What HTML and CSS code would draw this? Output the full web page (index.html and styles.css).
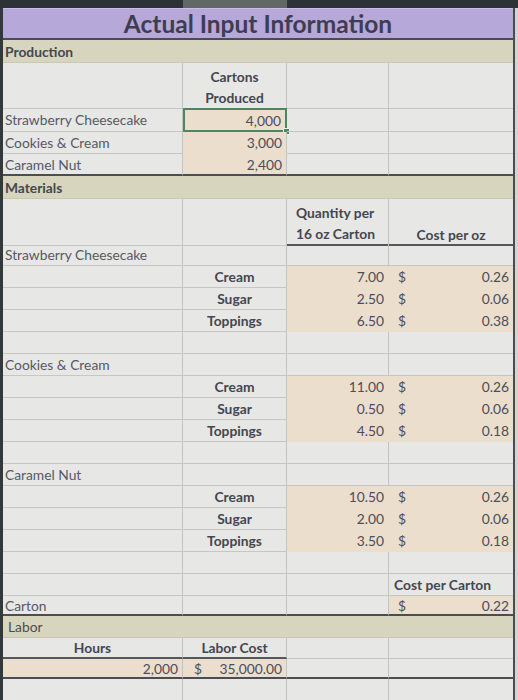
FILE: index.html
```html
<!DOCTYPE html>
<html>
<head>
<meta charset="utf-8">
<link rel="stylesheet" href="styles.css">
</head>
<body>
<div class="page">
  <div class="topbar"><span class="tab"></span></div>
  <div class="sheet">
    <div class="title">Actual Input Information</div>
    <div class="band band-prod">Production</div>

    <div class="row h45">
      <div class="c"></div>
      <div class="c ctr b two">Cartons<br>Produced</div>
      <div class="c"></div>
      <div class="c"></div>
    </div>
    <div class="row h24">
      <div class="c l lab">Strawberry Cheesecake</div>
      <div class="c r pe sel">4,000<span class="handle"></span></div>
      <div class="c"></div>
      <div class="c"></div>
    </div>
    <div class="row">
      <div class="c l lab">Cookies &amp; Cream</div>
      <div class="c r pe">3,000</div>
      <div class="c"></div>
      <div class="c"></div>
    </div>
    <div class="row dk">
      <div class="c l lab">Caramel Nut</div>
      <div class="c r pe">2,400</div>
      <div class="c"></div>
      <div class="c"></div>
    </div>

    <div class="band band-mat">Materials</div>

    <div class="row h45">
      <div class="c"></div>
      <div class="c"></div>
      <div class="c b two lft dkb">Quantity per<br>16 oz Carton</div>
      <div class="c b ctr bot dkb">Cost per oz</div>
    </div>

    <div class="row">
      <div class="c l lab">Strawberry Cheesecake</div>
      <div class="c"></div><div class="c"></div><div class="c"></div>
    </div>
    <div class="row">
      <div class="c"></div><div class="c ctr b">Cream</div>
      <div class="c r pe">7.00</div><div class="c pe money"><span>$</span><span>0.26</span></div>
    </div>
    <div class="row">
      <div class="c"></div><div class="c ctr b">Sugar</div>
      <div class="c r pe">2.50</div><div class="c pe money"><span>$</span><span>0.06</span></div>
    </div>
    <div class="row">
      <div class="c"></div><div class="c ctr b">Toppings</div>
      <div class="c r pe">6.50</div><div class="c pe money"><span>$</span><span>0.38</span></div>
    </div>
    <div class="row">
      <div class="c"></div><div class="c"></div><div class="c"></div><div class="c"></div>
    </div>

    <div class="row">
      <div class="c l lab">Cookies &amp; Cream</div>
      <div class="c"></div><div class="c"></div><div class="c"></div>
    </div>
    <div class="row">
      <div class="c"></div><div class="c ctr b">Cream</div>
      <div class="c r pe">11.00</div><div class="c pe money"><span>$</span><span>0.26</span></div>
    </div>
    <div class="row">
      <div class="c"></div><div class="c ctr b">Sugar</div>
      <div class="c r pe">0.50</div><div class="c pe money"><span>$</span><span>0.06</span></div>
    </div>
    <div class="row">
      <div class="c"></div><div class="c ctr b">Toppings</div>
      <div class="c r pe">4.50</div><div class="c pe money"><span>$</span><span>0.18</span></div>
    </div>
    <div class="row">
      <div class="c"></div><div class="c"></div><div class="c"></div><div class="c"></div>
    </div>

    <div class="row">
      <div class="c l lab">Caramel Nut</div>
      <div class="c"></div><div class="c"></div><div class="c"></div>
    </div>
    <div class="row">
      <div class="c"></div><div class="c ctr b">Cream</div>
      <div class="c r pe">10.50</div><div class="c pe money"><span>$</span><span>0.26</span></div>
    </div>
    <div class="row">
      <div class="c"></div><div class="c ctr b">Sugar</div>
      <div class="c r pe">2.00</div><div class="c pe money"><span>$</span><span>0.06</span></div>
    </div>
    <div class="row">
      <div class="c"></div><div class="c ctr b">Toppings</div>
      <div class="c r pe">3.50</div><div class="c pe money"><span>$</span><span>0.18</span></div>
    </div>
    <div class="row">
      <div class="c"></div><div class="c"></div><div class="c"></div><div class="c"></div>
    </div>

    <div class="row">
      <div class="c"></div><div class="c"></div><div class="c"></div>
      <div class="c b lft cpc">Cost per Carton</div>
    </div>
    <div class="row h20 dk">
      <div class="c l lab">Carton</div>
      <div class="c"></div><div class="c"></div>
      <div class="c pe money"><span>$</span><span>0.22</span></div>
    </div>

    <div class="band band-lab">Labor</div>

    <div class="row h21">
      <div class="c b ctr dkb">Hours</div>
      <div class="c b ctr dkb">Labor Cost</div>
      <div class="c"></div><div class="c"></div>
    </div>
    <div class="row h20 dk">
      <div class="c r pe">2,000</div>
      <div class="c pe money cost"><span>$</span><span>35,000.00</span></div>
      <div class="c"></div><div class="c"></div>
    </div>
    <div class="row">
      <div class="c"></div><div class="c"></div><div class="c"></div><div class="c"></div>
    </div>
  </div>
</div>
</body>
</html>
```

FILE: styles.css
```css
* { box-sizing: border-box; }
html, body {
  margin: 0;
  padding: 0;
}
body {
  width: 518px;
  height: 700px;
  overflow: hidden;
  background: #d4d4d2;
  font-family: Lato, "Open Sans", sans-serif;
  font-size: 13.8px;
  color: #4b4d58;
}
.page {
  display: flex;
  flex-direction: column;
}
.topbar {
  height: 8px;
  background: #2d3236;
  display: flex;
  padding-left: 183px;
}
.tab {
  width: 104px;
  height: 8px;
  background: #626866;
}
.sheet {
  width: 515px;
  border-left: 3px solid #33383a;
  border-right: 2px solid #4a4c52;
  background: #e7e7e5;
  display: flex;
  flex-direction: column;
}
.title {
  height: 32px;
  background: #b6a8d8;
  border-top: 1px solid #c9bfe4;
  border-bottom: 2px solid #4c4a5a;
  text-align: center;
  font-weight: 700;
  font-size: 24.5px;
  line-height: 29px;
  color: #3f3d52;
}
.band {
  background: #d7d5bd;
  font-weight: 700;
  color: #45474f;
  padding-left: 2px;
  display: flex;
  align-items: center;
  border-bottom: 1px solid #c9c8b6;
}
.band-prod { height: 23px; }
.band-mat { height: 23px; }
.band-lab { height: 22px; font-weight: 400; color: #4a4c55; padding-left: 5px; }

.row {
  display: grid;
  grid-template-columns: 180px 104px 102px 124px;
  height: 22px;
}
.row.h45 { height: 45px; }
.row.h24 { height: 24px; }
.row.h21 { height: 21px; }
.row.h20 { height: 20px; }

.c {
  border-right: 1px solid #c3c3c1;
  border-bottom: 1px solid #c6c6c4;
  display: flex;
  align-items: center;
  white-space: nowrap;
  position: relative;
}
.c:last-child { border-right: none; }

.row.dk > .c { border-bottom: 2px solid #4b4d52; }
.c.dkb { border-bottom: 2px solid #55575c; }

.l { padding-left: 2px; }
.lab { color: #555966; }
.r { justify-content: flex-end; padding-right: 4px; }
.ctr { justify-content: center; }
.lft { justify-content: flex-start; padding-left: 9px; }
.b { font-weight: 700; color: #44464f; }
.two {
  line-height: 21px;
  text-align: center;
  align-items: flex-start;
  padding-top: 3px;
}
.two.lft { text-align: left; }
.bot { align-items: flex-end; padding-bottom: 1px; }
.cpc { padding-left: 5px; }

.pe {
  background: #ecdecd;
  border-bottom-color: #ecdecd;
}
.row > .c.pe:nth-child(3) { border-right-color: #ecdecd; }

.money {
  justify-content: space-between;
  padding-left: 9px;
  padding-right: 4px;
}
.money.cost { padding-left: 11px; padding-right: 4px; }

.sel {
  border: 2px solid #4f8560;
  background: #ecdecd;
}
.handle {
  position: absolute;
  right: -5px;
  bottom: -5px;
  width: 7px;
  height: 7px;
  background: #4f8560;
  border: 1px solid #f0f0ee;
}
```
